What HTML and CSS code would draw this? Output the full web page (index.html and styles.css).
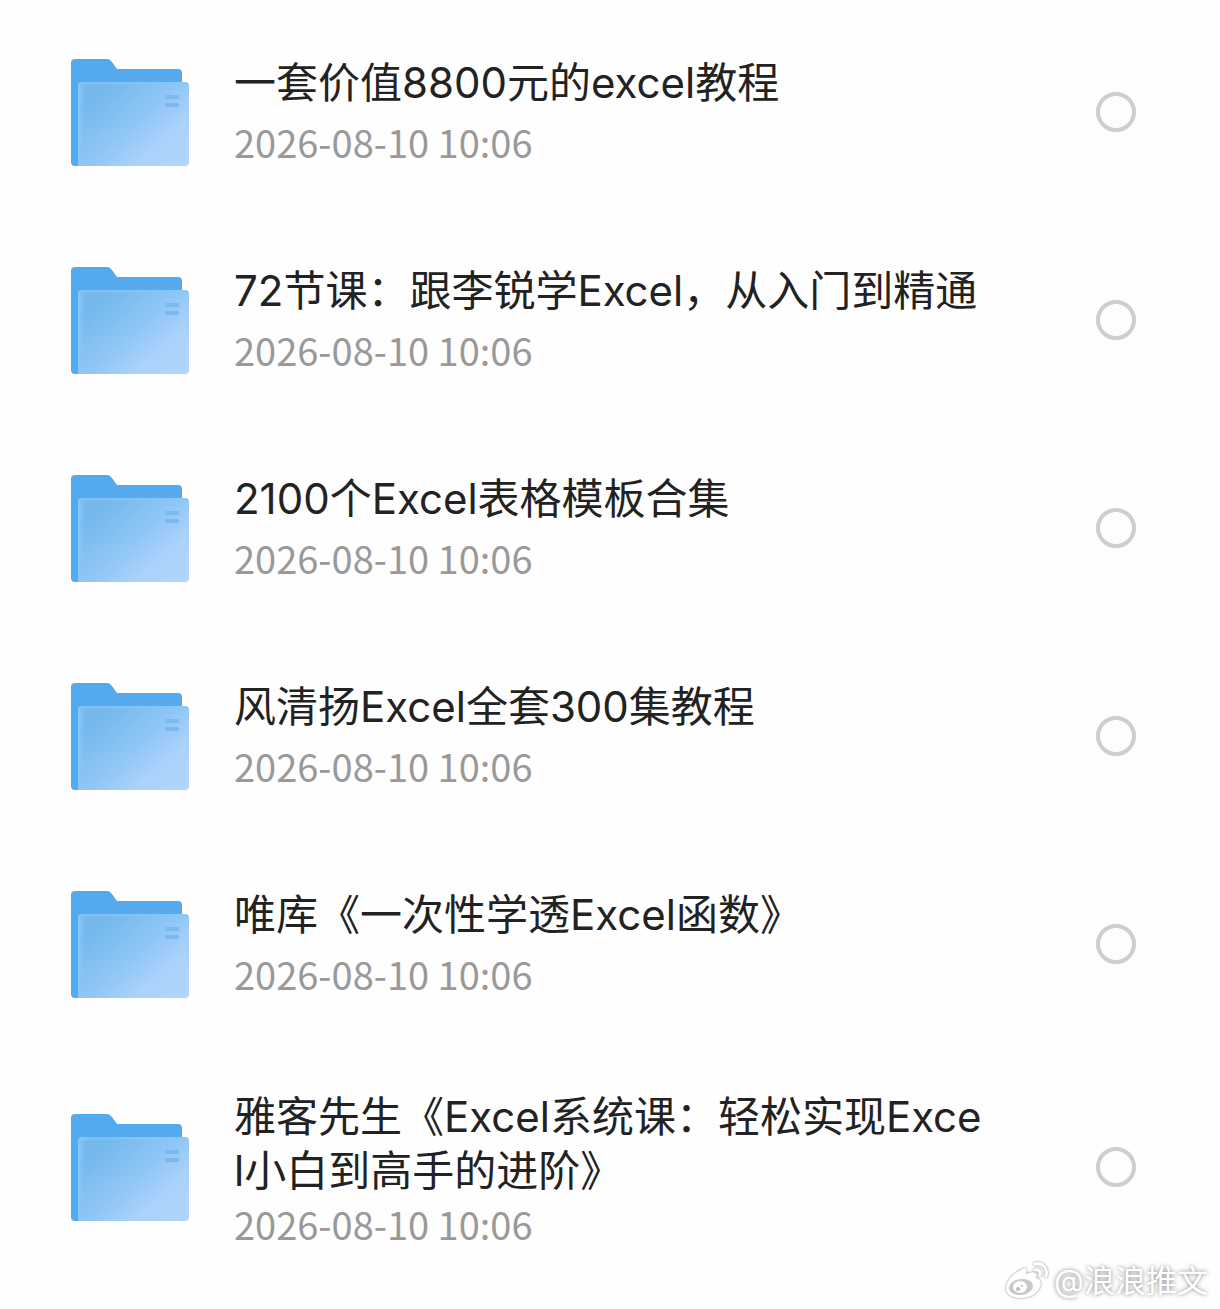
FILE: index.html
```
<!DOCTYPE html>
<html lang="zh">
<head>
    <meta charset="UTF-8">
    <meta name="viewport" content="width=device-width, initial-scale=1.0">
    <title>文件列表</title>
    <link rel="stylesheet" href="styles.css">
</head>
<body>
    <!-- 文件夹图标，供下方列表复用 -->
    <svg class="icon-defs" aria-hidden="true">
        <defs>
            <linearGradient id="folderFront" x1="0.15" y1="0.2" x2="0.9" y2="0.85">
                <stop offset="0" stop-color="#74b9ee"/>
                <stop offset="0.5" stop-color="#92c7f6"/>
                <stop offset="0.8" stop-color="#abd2fa"/>
                <stop offset="1" stop-color="#aed4fb"/>
            </linearGradient>
            <linearGradient id="folderEdge" x1="0" y1="0" x2="1" y2="0">
                <stop offset="0" stop-color="#8dc6f5"/>
                <stop offset="1" stop-color="#8dc6f5" stop-opacity="0"/>
            </linearGradient>
            <symbol id="folder" viewBox="0 0 118 108">
                <path fill="#54aaef" d="M4 1H36Q39 1 41 4L46 11H107Q111 11 111 15V60L20 108H4Q0 108 0 104V5Q0 1 4 1Z"/>
                <rect x="7" y="24" width="111" height="84" rx="4" fill="url(#folderFront)"/>
                <path fill="url(#folderEdge)" d="M7 28Q7 24 11 24H14V108H7Z"/>
                <path fill="#8dc6f5" d="M11 24H114Q117 24 118 27H8Q9 24 11 24Z" opacity="0.5"/>
                <rect x="94" y="37" width="14" height="4" rx="1" fill="#7cb8ee"/>
                <rect x="94" y="45" width="14" height="4" rx="1" fill="#7cb8ee"/>
            </symbol>
        </defs>
    </svg>

    <ul class="file-list">
        <li class="file">
            <svg class="file-icon" aria-hidden="true"><use href="#folder"/></svg>
            <label class="file-info" for="file1">
                <span class="file-name">一套价值8800元的excel教程</span>
                <time class="file-date">2026-08-10 10:06</time>
            </label>
            <input type="checkbox" class="file-check" id="file1">
        </li>
        <li class="file">
            <svg class="file-icon" aria-hidden="true"><use href="#folder"/></svg>
            <label class="file-info" for="file2">
                <span class="file-name">72节课：跟李锐学Excel，从入门到精通</span>
                <time class="file-date">2026-08-10 10:06</time>
            </label>
            <input type="checkbox" class="file-check" id="file2">
        </li>
        <li class="file">
            <svg class="file-icon" aria-hidden="true"><use href="#folder"/></svg>
            <label class="file-info" for="file3">
                <span class="file-name">2100个Excel表格模板合集</span>
                <time class="file-date">2026-08-10 10:06</time>
            </label>
            <input type="checkbox" class="file-check" id="file3">
        </li>
        <li class="file">
            <svg class="file-icon" aria-hidden="true"><use href="#folder"/></svg>
            <label class="file-info" for="file4">
                <span class="file-name">风清扬Excel全套300集教程</span>
                <time class="file-date">2026-08-10 10:06</time>
            </label>
            <input type="checkbox" class="file-check" id="file4">
        </li>
        <li class="file">
            <svg class="file-icon" aria-hidden="true"><use href="#folder"/></svg>
            <label class="file-info" for="file5">
                <span class="file-name">唯库《一次性学透Excel函数》</span>
                <time class="file-date">2026-08-10 10:06</time>
            </label>
            <input type="checkbox" class="file-check" id="file5">
        </li>
        <li class="file file-long">
            <svg class="file-icon" aria-hidden="true"><use href="#folder"/></svg>
            <label class="file-info" for="file6">
                <span class="file-name">雅客先生《Excel系统课：轻松实现Excel小白到高手的进阶》</span>
                <time class="file-date">2026-08-10 10:06</time>
            </label>
            <input type="checkbox" class="file-check" id="file6">
        </li>
    </ul>

    <div class="watermark">
        <svg class="watermark-logo" viewBox="0 0 46 40" aria-hidden="true">
            <path fill="#fff" d="M17 9C20 6 24 6 22 13C29 10 34 11 32 17C36 18 38 21 36 26C33 34 24 37 16 37C8 37 2 33 2 27C2 20 10 12 17 9Z"/>
            <ellipse cx="17" cy="26" rx="12" ry="8" fill="#c8c8c8" transform="rotate(-8 17 26)"/>
            <ellipse cx="16" cy="26" rx="7" ry="6" fill="#fff"/>
            <circle cx="14" cy="28" r="2" fill="#bbb"/>
            <circle cx="18" cy="25" r="1" fill="#bbb"/>
            <path fill="none" stroke="#fff" stroke-width="3" stroke-linecap="round" d="M31 3C39 1 44 8 42 15M31 9C35 8 37 11 36 14"/>
        </svg>
        <span>@浪浪推文</span>
    </div>
</body>
</html>
```
FILE: styles.css
```
* {
    box-sizing: border-box;
}

body {
    margin: 0;
    min-height: 100vh;
    position: relative;
    background: #fefefe;
    color: #222;
    font-family: Inter, 'Noto Sans CJK SC', sans-serif;
}

.icon-defs {
    position: absolute;
    width: 0;
    height: 0;
}

.file-list {
    list-style: none;
    margin: 0;
    padding: 8px 84px 24px 71px;
}

.file {
    display: flex;
    align-items: center;
    min-height: 208px;
}

.file-icon {
    flex: none;
    width: 118px;
    height: 108px;
}

.file-info {
    flex: 1;
    display: flex;
    flex-direction: column;
    gap: 6px;
    margin: 0 108px 0 45px;
}

.file-name {
    font-size: 42px;
    line-height: 54px;
    word-break: break-all;
}

.file-date {
    color: #999;
    font-family: 'Noto Sans CJK SC', sans-serif;
    font-size: 38px;
    line-height: 52px;
}

/* 两行标题的行 */
.file-long {
    min-height: 238px;
}

.file-long .file-info {
    gap: 0;
    padding-top: 6px;
}

.file-check {
    appearance: none;
    flex: none;
    width: 40px;
    height: 40px;
    margin: 0;
    border: 4px solid #cdcdd2;
    border-radius: 50%;
    cursor: pointer;
}

.file-check:checked {
    border-color: #54aaef;
    background: #54aaef;
}

/* 水印 */
.watermark {
    position: absolute;
    right: 12px;
    bottom: 9px;
    display: flex;
    align-items: center;
    gap: 4px;
    color: #fff;
    font-size: 31px;
    line-height: 40px;
    text-shadow: 0 0 4px rgba(0, 0, 0, 0.5);
}

.watermark-logo {
    width: 46px;
    height: 40px;
    filter: drop-shadow(0 0 1px rgba(0, 0, 0, 0.5));
}
```
